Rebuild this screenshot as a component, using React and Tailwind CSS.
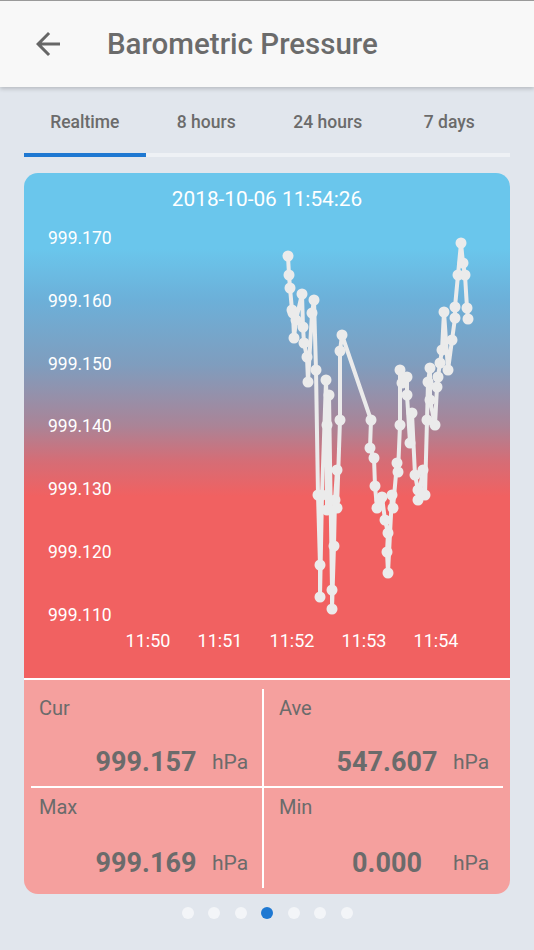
import React from "react";

const points = [
  [288, 256], [289, 275], [290, 288], [292, 310], [293, 313], [294, 338],
  [296, 320], [302, 294], [303, 327], [304, 343], [307, 357], [308, 382],
  [312, 313], [314, 300], [316, 370], [318, 495], [320, 565], [320, 597],
  [322, 495], [326, 380], [327, 425], [327, 510], [329, 395], [332, 590],
  [332, 609], [334, 546], [335, 500], [337, 470], [337, 508], [340, 420],
  [340, 351], [342, 335], [371, 420], [370, 448], [374, 458], [375, 486],
  [377, 508], [380, 500], [382, 497], [385, 520], [388, 533], [387, 552],
  [388, 573], [392, 495], [393, 508], [397, 463], [398, 472], [400, 425],
  [400, 370], [402, 383], [407, 377], [407, 395], [410, 443], [412, 413],
  [415, 475], [418, 490], [418, 500], [423, 470], [425, 495], [427, 420],
  [428, 382], [430, 368], [430, 400], [435, 425], [437, 387], [438, 377],
  [440, 363], [442, 350], [444, 312], [448, 370], [452, 340], [455, 318],
  [455, 307], [458, 275], [461, 243], [463, 263], [465, 275], [467, 308],
  [468, 319],
];

const yLabels = ["999.170", "999.160", "999.150", "999.140", "999.130", "999.120", "999.110"];
const xLabels = ["11:50", "11:51", "11:52", "11:53", "11:54"];
const tabs = ["Realtime", "8 hours", "24 hours", "7 days"];

function StatCell({ label, value, className }) {
  return (
    <div className={`flex flex-col ${className}`}>
      <div className="text-[20px] leading-6 text-[#6b6b6b]">{label}</div>
      <div className="mt-auto flex items-center justify-end">
        <div className="w-[120px] text-center text-[27px] font-bold leading-8 text-[#6b6b6b]">
          {value}
        </div>
        <div className="ml-[6px] w-[50px] text-[21px] leading-8 text-[#6b6b6b]">hPa</div>
      </div>
    </div>
  );
}

export default function App() {
  return (
    <div
      className="flex h-[950px] w-[534px] flex-col overflow-hidden bg-[#e1e6ed]"
      style={{ fontFamily: "Roboto, 'Noto Sans', sans-serif" }}
    >
      {/* App bar */}
      <div className="relative z-10 flex h-[87px] shrink-0 items-center border-t border-[#9a9a9a] bg-[#f8f8f8] shadow-[0_2px_4px_rgba(0,0,0,0.18)]">
        <svg viewBox="0 0 24 24" className="ml-[30px] h-9 w-9" fill="#666666">
          <path d="M20 11H7.83l5.59-5.59L12 4l-8 8 8 8 1.41-1.41L7.83 13H20v-2z" />
        </svg>
        <h1 className="ml-[41px] text-[29.5px] font-medium text-[#6b6b6b]">Barometric Pressure</h1>
      </div>

      {/* Tabs */}
      <div className="mx-6 mt-[23px] shrink-0">
        <div className="flex">
          {tabs.map((t) => (
            <div key={t} className="flex-1 text-center text-[17.5px] font-medium leading-6 text-[#6b6b6b]">
              {t}
            </div>
          ))}
        </div>
        <div className="mt-[19px] flex h-1 bg-[#eef1f5]">
          <div className="w-1/4 bg-[#1e78d2]" />
        </div>
      </div>

      {/* Card */}
      <div className="mx-6 mt-4 shrink-0 overflow-hidden rounded-[14px]">
        <div className="relative h-[505px] bg-[linear-gradient(to_bottom,#6ac6ec_0%,#6ac6ec_15%,#6cb0d9_25%,#7f9dbe_38%,#aa8497_50%,#d56d76_57%,#f16161_64%,#f16161_100%)]">
          <div className="pt-[13px] text-center text-[20.8px] leading-[26px] text-white">
            2018-10-06 11:54:26
          </div>
          <div className="mt-4 flex h-[397px] flex-col justify-between pl-6">
            {yLabels.map((l) => (
              <div key={l} className="text-[17.5px] leading-5 text-white">{l}</div>
            ))}
          </div>
          <div className="mt-[6px] flex pl-[88px]">
            {xLabels.map((l) => (
              <div key={l} className="w-[72px] text-center text-[18px] leading-5 text-white">{l}</div>
            ))}
          </div>
          <svg
            viewBox="24 173 486 505"
            className="pointer-events-none absolute inset-0 h-full w-full"
          >
            <polyline
              points={points.map((p) => p.join(",")).join(" ")}
              fill="none"
              stroke="#ebebeb"
              strokeWidth="4"
              strokeLinejoin="round"
            />
            {points.map(([x, y], i) => (
              <circle key={i} cx={x} cy={y} r="5.5" fill="#ebebeb" />
            ))}
          </svg>
        </div>
        <div className="h-[2px] bg-white" />
        <div className="bg-[#f5a09e] px-[7px] pb-[6px] pt-[9px]">
          <div className="flex h-[99px] border-b-2 border-white">
            <StatCell label="Cur" value="999.157" className="w-[233px] border-r-2 border-white pb-2 pl-2 pt-[7px]" />
            <StatCell label="Ave" value="547.607" className="flex-1 pb-2 pl-[15px] pt-[7px]" />
          </div>
          <div className="flex h-[100px]">
            <StatCell label="Max" value="999.169" className="w-[233px] border-r-2 border-white pb-[9px] pl-2 pt-[7px]" />
            <StatCell label="Min" value="0.000" className="flex-1 pb-[9px] pl-[15px] pt-[7px]" />
          </div>
        </div>
      </div>

      {/* Page dots */}
      <div className="mt-[13px] flex justify-center gap-[14.5px]">
        {[0, 1, 2, 3, 4, 5, 6].map((i) => (
          <div key={i} className={`h-3 w-3 rounded-full ${i === 3 ? "bg-[#1e78d2]" : "bg-[#f3f5f8]"}`} />
        ))}
      </div>
    </div>
  );
}
